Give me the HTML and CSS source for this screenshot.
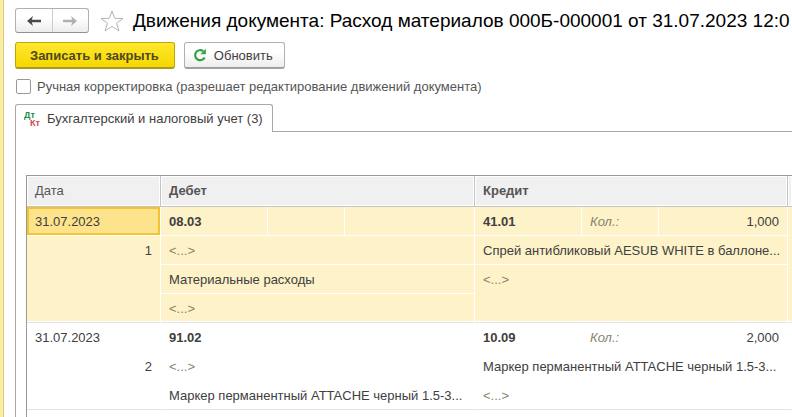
FILE: index.html
```html
<!DOCTYPE html>
<html lang="ru">
<head>
    <meta charset="UTF-8">
    <meta name="viewport" content="width=device-width, initial-scale=1.0">
    <title>Движения документа</title>
    <link rel="stylesheet" href="styles.css">
</head>
<body>
    <main class="window">
        <header class="title-bar">
            <div class="nav">
                <button type="button" class="nav-button" aria-label="Назад">
                    <svg width="14" height="10" viewBox="0 0 14 10"><path d="M0 5L6 0L4.8 3.8H14V6.2H4.8L6 10Z" fill="#4a4a4a"/></svg>
                </button>
                <button type="button" class="nav-button" aria-label="Вперед">
                    <svg width="14" height="10" viewBox="0 0 14 10"><path d="M14 5L8 0L9.2 3.8H0V6.2H9.2L8 10Z" fill="#b0b0b0"/></svg>
                </button>
            </div>
            <button type="button" class="favorite" aria-label="В избранное">
                <svg width="24" height="22" viewBox="0 0 24 22"><path d="M12 1L14.7 8.3L23 8.5L16.5 13.3L19 21L12 16.4L5 21L7.5 13.3L1 8.5L9.3 8.3Z" fill="none" stroke="#b4b4b4"/></svg>
            </button>
            <h1>Движения документа: Расход материалов 000Б-000001 от 31.07.2023 12:0</h1>
        </header>

        <div class="toolbar">
            <button type="button" class="button button-primary">Записать и закрыть</button>
            <button type="button" class="button button-refresh">
                <svg width="14" height="14" viewBox="0 0 14 14"><path d="M11.6 9.4A5 5 0 1 1 10.2 3.2" fill="none" stroke="#35a047" stroke-width="2.2"/><path d="M12.8 0.8V6.2H7.4Z" fill="#35a047"/></svg>
                Обновить
            </button>
        </div>

        <div class="option">
            <input type="checkbox" id="manual">
            <label for="manual">Ручная корректировка (разрешает редактирование движений документа)</label>
        </div>

        <div class="tabs" role="tablist">
            <button type="button" class="tab" role="tab" aria-selected="true">
                <svg width="18" height="16" viewBox="0 0 18 16" class="tab-icon"><text x="0" y="7" fill="#1f8a4c">Дт</text><text x="6" y="15" fill="#d0474b">Кт</text></svg>
                Бухгалтерский и налоговый учет (3)
            </button>
        </div>

        <section class="panel">
            <div class="list">
                <table class="entries">
                    <colgroup>
                        <col class="col-date">
                        <col class="col-account">
                        <col class="col-label">
                        <col class="col-value">
                        <col class="col-account">
                        <col class="col-label">
                        <col class="col-sum">
                        <col>
                    </colgroup>
                    <thead>
                        <tr>
                            <th class="plain">Дата</th>
                            <th colspan="3">Дебет</th>
                            <th colspan="3">Кредит</th>
                            <th class="rest"></th>
                        </tr>
                    </thead>
                    <tbody class="selected">
                        <tr>
                            <td class="current">31.07.2023</td>
                            <td class="account">08.03</td>
                            <td></td>
                            <td></td>
                            <td class="account">41.01</td>
                            <td class="hint">Кол.:</td>
                            <td class="number">1,000</td>
                            <td rowspan="4" class="rest last"></td>
                        </tr>
                        <tr>
                            <td rowspan="3" class="number last">1</td>
                            <td colspan="3" class="empty">&lt;...&gt;</td>
                            <td colspan="3">Спрей антибликовый AESUB WHITE в баллоне...</td>
                        </tr>
                        <tr>
                            <td colspan="3">Материальные расходы</td>
                            <td colspan="3" rowspan="2" class="empty last">&lt;...&gt;</td>
                        </tr>
                        <tr>
                            <td colspan="3" class="empty last">&lt;...&gt;</td>
                        </tr>
                    </tbody>
                    <tbody>
                        <tr>
                            <td>31.07.2023</td>
                            <td class="account">91.02</td>
                            <td></td>
                            <td></td>
                            <td class="account">10.09</td>
                            <td class="hint">Кол.:</td>
                            <td class="number">2,000</td>
                            <td rowspan="3" class="rest last"></td>
                        </tr>
                        <tr>
                            <td rowspan="2" class="number last">2</td>
                            <td colspan="3" class="empty">&lt;...&gt;</td>
                            <td colspan="3">Маркер перманентный ATTACHE черный 1.5-3...</td>
                        </tr>
                        <tr>
                            <td colspan="3" class="last">Маркер перманентный ATTACHE черный 1.5-3...</td>
                            <td colspan="3" class="empty last">&lt;...&gt;</td>
                        </tr>
                    </tbody>
                </table>
            </div>
        </section>
    </main>
</body>
</html>
```
FILE: styles.css
```css
* {
    box-sizing: border-box;
}

body {
    margin: 0;
    font-family: "Liberation Sans", Arial, sans-serif;
    font-size: 13px;
    color: #404040;
    background: #fff;
    overflow: hidden;
}

button {
    font: inherit;
    color: inherit;
    padding: 0;
    cursor: pointer;
}

.window {
    display: flex;
    flex-direction: column;
    min-height: 100vh;
    padding: 8px 0 0 12px;
    border-left: 3px solid #fbeea0;
    box-shadow: inset 1px 0 #d8cc8c;
}

.title-bar {
    display: flex;
    align-items: center;
    height: 25px;
}

.nav {
    display: flex;
    flex: none;
    width: 74px;
    height: 25px;
    border: 1px solid #b0b0b0;
    border-bottom-color: #909090;
    border-radius: 3px;
    background: linear-gradient(#fff 40%, #ececec);
}

.nav-button {
    flex: 1;
    display: flex;
    align-items: center;
    justify-content: center;
    border: 0;
    background: none;
}

.nav-button + .nav-button {
    border-left: 1px solid #ccc;
}

.favorite {
    display: flex;
    flex: none;
    margin: 0 9px 0 11px;
    border: 0;
    background: none;
}

h1 {
    margin: 0;
    font-size: 19px;
    font-weight: normal;
    line-height: 24px;
    color: #000;
    white-space: nowrap;
}

.toolbar {
    display: flex;
    gap: 9px;
    margin-top: 9px;
}

.button {
    display: flex;
    align-items: center;
    gap: 7px;
    height: 27px;
    padding: 0 15px 0 14px;
    border: 1px solid #b0b0b0;
    border-bottom: 2px solid #a0a0a0;
    border-radius: 3px;
    background: linear-gradient(#fff 40%, #ececec);
}

.button-primary {
    border-color: #c2a800;
    border-bottom-color: #ac9a20;
    background: linear-gradient(#ffe72e, #f5d800);
    color: #4f4820;
    font-weight: bold;
}

.button-refresh {
    padding: 0 11px 0 8px;
}

.option {
    display: flex;
    align-items: center;
    gap: 6px;
    height: 15px;
    margin-top: 10px;
    color: #555;
}

.option input {
    appearance: none;
    width: 15px;
    height: 15px;
    margin: 0 0 0 1px;
    border: 1px solid #999;
    border-radius: 2px;
    background: #fff;
}

.option input:checked {
    background: #ffe72e;
}

.tabs {
    display: flex;
    margin-top: 10px;
    border-bottom: 1px solid #a8a8a8;
}

.tab {
    display: flex;
    align-items: center;
    gap: 5px;
    height: 28px;
    margin-bottom: -1px;
    padding: 0 9px 0 8px;
    border: 1px solid #a8a8a8;
    border-bottom: 0;
    border-radius: 3px 3px 0 0;
    background: #fff;
}

.tab-icon {
    font-size: 9px;
    font-weight: bold;
}

.panel {
    flex: 1;
    display: flex;
    padding: 43px 0 0 10px;
    border-left: 1px solid #a8a8a8;
    overflow: hidden;
}

.list {
    flex: 1;
    border-top: 1px solid #999;
    border-left: 1px solid #999;
}

.entries {
    width: 100%;
    table-layout: fixed;
    border-spacing: 0;
}

.col-date {
    width: 134px;
}

.col-account {
    width: 107px;
}

.col-label {
    width: 77px;
}

.col-value {
    width: 130px;
}

.col-sum {
    width: 129px;
}

/* header cells have a light bevel inside the grey lines */
th {
    height: 31px;
    padding: 0 8px 2px;
    border-right: 1px solid #c4c4c4;
    border-bottom: 1px solid #c4c4c4;
    background: #f0f0f0;
    box-shadow: inset 0 0 0 1px #fff;
    color: #555;
    text-align: left;
}

.plain {
    font-weight: normal;
}

td {
    height: 29px;
    padding: 7px 8px 5px;
    border-right: 1px solid #fff;
    border-bottom: 1px solid #fff;
    line-height: 16px;
    vertical-align: top;
    white-space: nowrap;
}

.rest {
    padding: 0;
    border-right: 0;
}

.selected td {
    background: #fdf2c8;
}

td.last {
    border-bottom-color: #e4e4e4;
}

.selected .last {
    box-shadow: inset 0 -1px #fff;
}

.selected .current {
    background: #fde38c;
    box-shadow: inset 0 0 0 2px #f4c430;
}

.account {
    font-weight: bold;
}

.number {
    text-align: right;
}

.hint {
    color: #88836c;
    font-style: italic;
}

.empty {
    color: #88836c;
}
```
